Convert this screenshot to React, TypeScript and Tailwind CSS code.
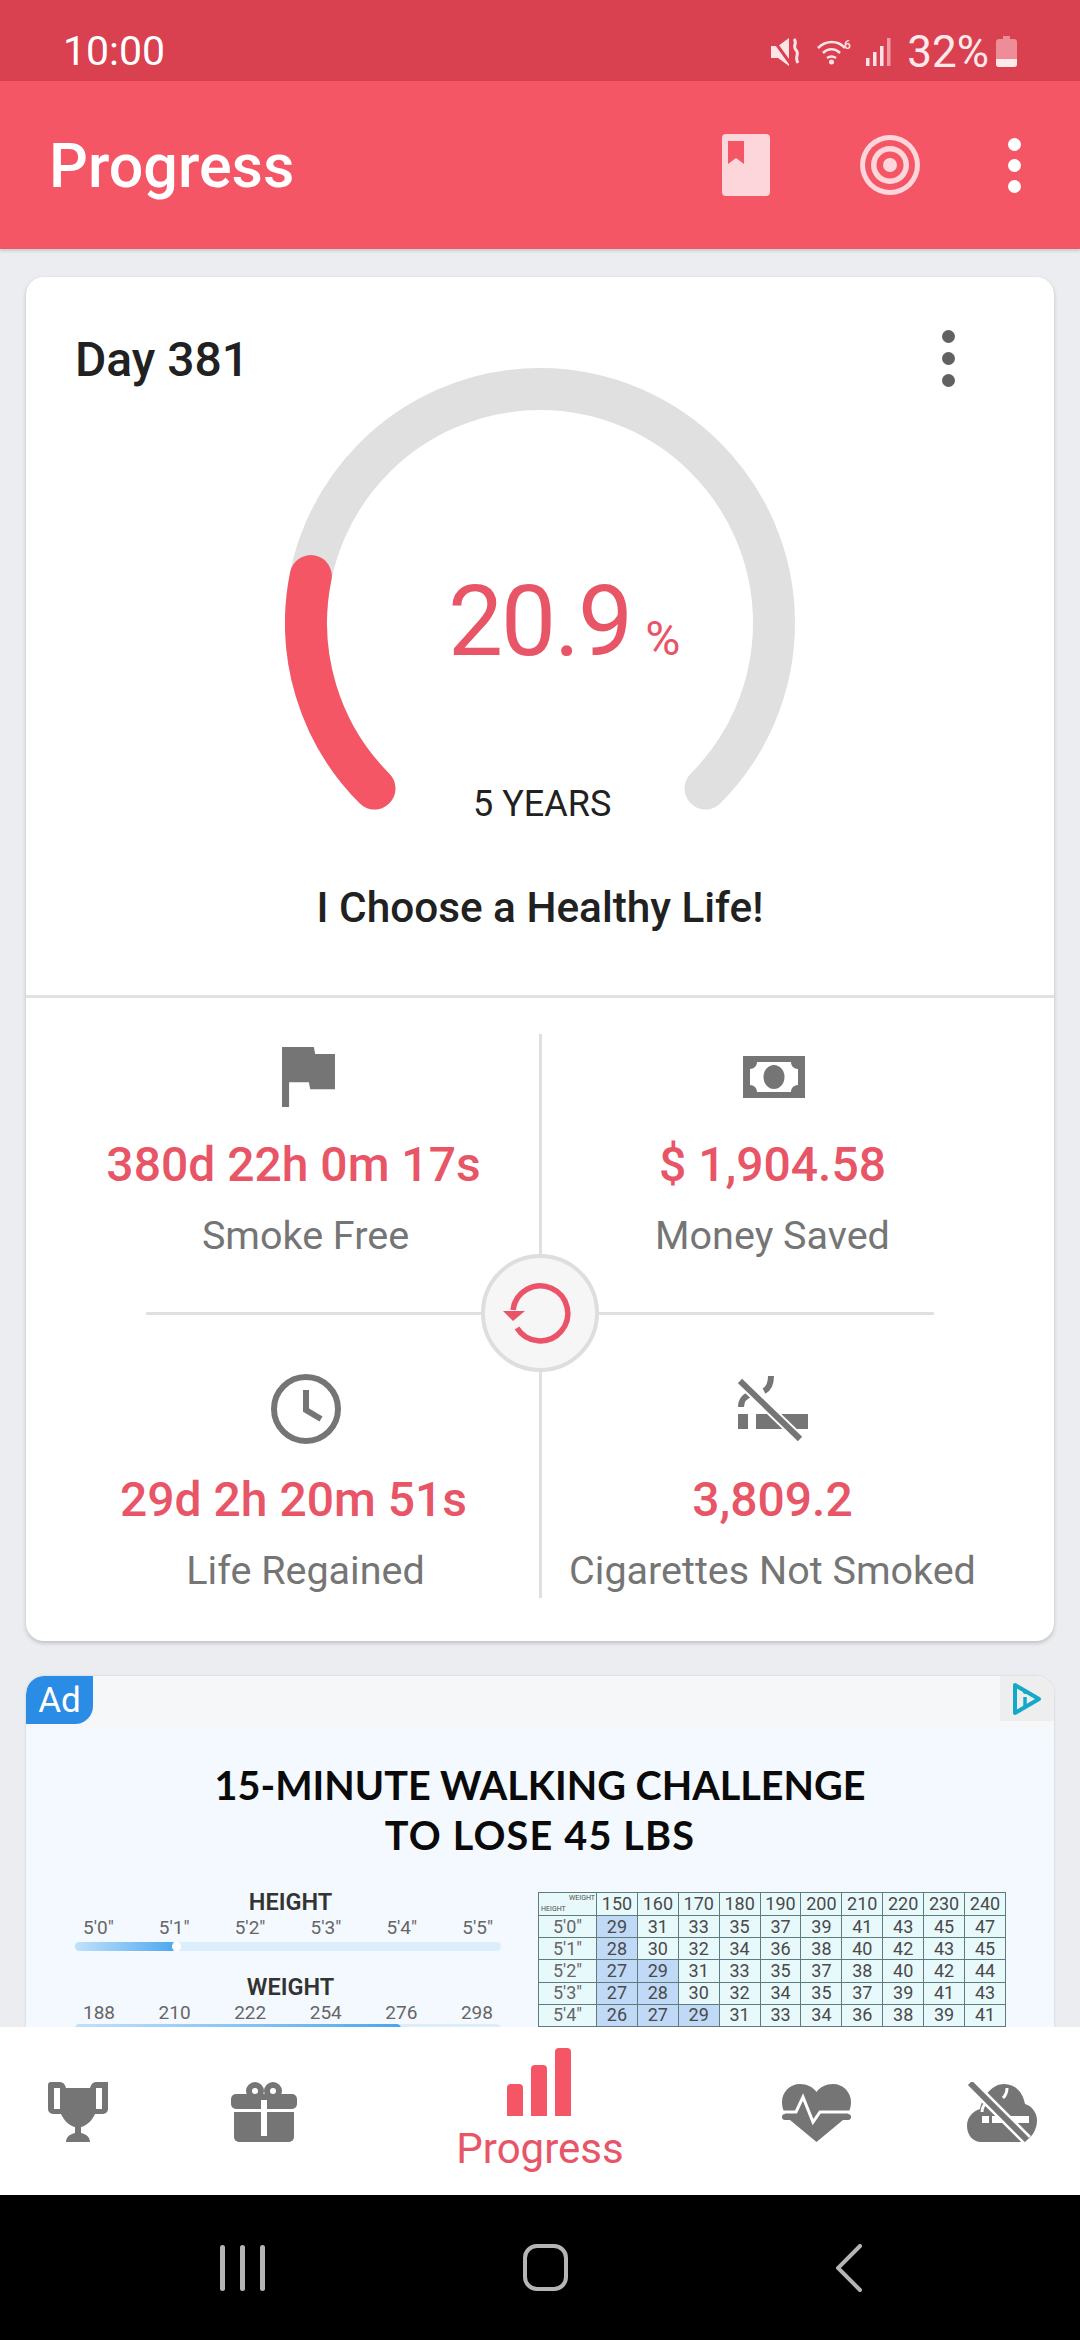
const GRAY = '#757575';

const tableHead = ['150', '160', '170', '180', '190', '200', '210', '220', '230', '240'];
const tableRows = [
  { h: `5'0"`, v: [29, 31, 33, 35, 37, 39, 41, 43, 45, 47], hi: 1 },
  { h: `5'1"`, v: [28, 30, 32, 34, 36, 38, 40, 42, 43, 45], hi: 1 },
  { h: `5'2"`, v: [27, 29, 31, 33, 35, 37, 38, 40, 42, 44], hi: 2 },
  { h: `5'3"`, v: [27, 28, 30, 32, 34, 35, 37, 39, 41, 43], hi: 2 },
  { h: `5'4"`, v: [26, 27, 29, 31, 33, 34, 36, 38, 39, 41], hi: 3 },
];

function Gauge() {
  // 270 degree track, r=234, red part ends ~11deg above horizontal
  return (
    <svg width="510" height="470" viewBox="0 0 510 470" className="block">
      <path d="M89.5 420.5 A234 234 0 1 1 420.5 420.5" fill="none" stroke="#E0E0E0" strokeWidth="42" strokeLinecap="round" />
      <path d="M89.5 420.5 A234 234 0 0 1 25.8 208" fill="none" stroke="#F45665" strokeWidth="42" strokeLinecap="round" />
    </svg>
  );
}

function Stat({ icon, value, label, valueClass }: { icon: React.ReactNode; value: string; label: string; valueClass: string }) {
  return (
    <div className="flex flex-col items-center">
      <div className="h-[70px] flex items-center justify-center">{icon}</div>
      <div className={`text-[48px] leading-[56px] font-medium text-[#E85567] ${valueClass}`}>{value}</div>
      <div className="mt-[18px] text-[39.5px] leading-[50px] text-[#757575]">{label}</div>
    </div>
  );
}

function AdTable() {
  return (
    <table className="mt-[3px] w-[468px] table-fixed border-collapse text-[18px] leading-none text-[#4a4a4a] text-center">
      <colgroup>
        <col className="w-[58px]" />
        {tableHead.map(h => <col key={h} />)}
      </colgroup>
      <tbody>
        <tr className="h-[23px] bg-[#E8F9FC]">
          <td className="border border-[#5F7C7C] p-0 relative">
            <span className="absolute right-[1px] top-[2px] text-[7px]">WEIGHT</span>
            <span className="absolute left-[2px] bottom-[2px] text-[7px]">HEIGHT</span>
          </td>
          {tableHead.map(h => <td key={h} className="border border-[#5F7C7C] p-0">{h}</td>)}
        </tr>
        {tableRows.map(r => (
          <tr key={r.h} className="h-[22.2px] bg-[#E8F9FC]">
            <td className="border border-[#5F7C7C] p-0 text-[#666]">{r.h}</td>
            {r.v.map((n, i) => (
              <td key={i} className={`border border-[#5F7C7C] p-0 ${i < r.hi ? 'bg-[#BFD9F7]' : ''}`}>{n}</td>
            ))}
          </tr>
        ))}
        {/* next row only peeks out above the bottom nav */}
        <tr className="h-[22.2px] bg-[#E8F9FC]">
          <td className="border border-[#5F7C7C] p-0" />
          {tableHead.map((h, i) => <td key={h} className={`border border-[#5F7C7C] p-0 ${i < 3 ? 'bg-[#BFD9F7]' : ''}`} />)}
        </tr>
      </tbody>
    </table>
  );
}

function Slider({ title, labels, fill, dot, trackClass }: { title: string; labels: string[]; fill: string; dot: boolean; trackClass: string }) {
  return (
    <div className="w-[426px] flex flex-col">
      <div className="pl-[5px] text-center text-[23.5px] leading-[26px] font-semibold text-[#333]">{title}</div>
      <div className="flex justify-between px-[8px] mt-[1px] text-[19px] leading-[24px] text-[#666]">
        {labels.map(l => <span key={l}>{l}</span>)}
      </div>
      <div className={`relative h-[9px] rounded-full bg-[#DCEDFC] ${trackClass}`}>
        <div className={`h-full rounded-full bg-gradient-to-r from-[#BFE2FB] to-[#4AA6EE] ${fill}`} />
        {dot && <div className="absolute left-[97px] top-[0px] w-[9px] h-[9px] rounded-full bg-white" />}
      </div>
    </div>
  );
}

export default function App() {
  return (
    <div className="w-[1080px] h-[2340px] flex flex-col overflow-hidden bg-[#EBEDF1] font-['Roboto',sans-serif]">
      {/* Status bar */}
      <div className="h-[81px] shrink-0 bg-[#D94050] flex items-center pl-[63px] pr-[63px] pt-[22px] text-white">
        <span className="text-[41px] leading-none">10:00</span>
        <div className="ml-auto flex items-center">
          <svg width="30" height="28" viewBox="0 0 30 28" fill="#FFE4E7">
            <path d="M0 8h7l11-8v28L7 20H0z" />
            <path d="M1 0l18 25" stroke="#D94050" strokeWidth="3" />
            <path d="M23 1c4 4-2 7 2 11s-2 7 2 13" fill="none" stroke="#FFE4E7" strokeWidth="3" />
          </svg>
          <svg width="36" height="26" viewBox="0 0 36 26" fill="none" stroke="#FFE4E7" strokeWidth="2.5" className="ml-[16px] overflow-visible">
            <path d="M1 9c8-8 20-8 27 0M6 14c5-5 12-5 17 0M10 19c3-2 6-2 9 0" />
            <circle cx="14.5" cy="23" r="2.5" fill="#FFE4E7" stroke="none" />
            <text x="27" y="10" fontSize="12" fontWeight="500" fill="#FFE4E7" stroke="none">6</text>
          </svg>
          <svg width="26" height="28" viewBox="0 0 26 28" className="ml-[13px]">
            <rect x="0" y="20" width="3.5" height="8" fill="#FFE4E7" />
            <rect x="7" y="14" width="3.5" height="14" fill="#FFE4E7" />
            <rect x="14" y="8" width="3.5" height="20" fill="#FFE4E7" />
            <rect x="21" y="0" width="3.5" height="28" fill="#F39AA4" />
          </svg>
          <span className="ml-[15px] text-[44px] leading-none text-[#FFE9EB]">32%</span>
          <svg width="21" height="31" viewBox="0 0 21 31" className="ml-[7px]">
            <path d="M7 0h7v3h4a3 3 0 0 1 3 3v22a3 3 0 0 1-3 3H3a3 3 0 0 1-3-3V6a3 3 0 0 1 3-3h4z" fill="#EE8C97" />
            <path d="M0 23h21v5a3 3 0 0 1-3 3H3a3 3 0 0 1-3-3z" fill="#FFE9EB" />
          </svg>
        </div>
      </div>

      {/* App bar */}
      <div className="h-[168px] shrink-0 bg-[#F45665] flex items-center pl-[49px] pr-[59px] shadow-[0_2px_3px_rgba(0,0,0,0.15)] z-10 text-white">
        <h1 className="text-[61px] leading-none font-medium mt-[3px]">Progress</h1>
        <svg width="48" height="62" viewBox="0 0 48 62" className="ml-auto">
          <rect width="48" height="62" rx="4" fill="#FDD6DB" />
          <path d="M6 7h16v23l-8-6-8 6z" fill="#F45665" />
        </svg>
        <svg width="60" height="60" viewBox="0 0 60 60" className="ml-[90px]">
          <circle cx="30" cy="30" r="30" fill="#FDD6DB" />
          <circle cx="30" cy="30" r="25" fill="#F45665" />
          <circle cx="30" cy="30" r="19" fill="#FDD6DB" />
          <circle cx="30" cy="30" r="13.5" fill="#F45665" />
          <circle cx="30" cy="30" r="7" fill="#FDD6DB" />
        </svg>
        <div className="ml-[88px] flex flex-col gap-[8px]">
          <div className="w-[13px] h-[13px] rounded-full bg-white" />
          <div className="w-[13px] h-[13px] rounded-full bg-white" />
          <div className="w-[13px] h-[13px] rounded-full bg-white" />
        </div>
      </div>

      {/* Scroll area */}
      <div className="flex-1 min-h-0 overflow-hidden px-[26px] pt-[28px]">
        {/* Main card */}
        <div className="h-[1364px] bg-white rounded-[18px] shadow-[0_2px_4px_rgba(0,0,0,0.2)] flex flex-col">
          {/* Gauge section */}
          <div className="h-[721px] shrink-0 relative flex flex-col items-center pt-[91px] border-b-[3px] border-[#E2E2E2]">
            <div className="absolute left-[49px] top-[58px] text-[48px] leading-[50px] font-medium text-[#212121]">Day 381</div>
            <div className="absolute left-[916px] top-[53px] flex flex-col gap-[9px]">
              <div className="w-[13px] h-[13px] rounded-full bg-[#616161]" />
              <div className="w-[13px] h-[13px] rounded-full bg-[#616161]" />
              <div className="w-[13px] h-[13px] rounded-full bg-[#616161]" />
            </div>
            <div className="relative">
              <Gauge />
              <div className="absolute left-[163px] top-[198px] flex items-baseline text-[#E85567]">
                <span className="text-[98px] leading-[112px] tracking-[-0.02em]">20.9</span>
                <span className="ml-[14px] text-[48px] leading-none">%</span>
              </div>
              <div className="absolute left-[188px] top-[415px] text-[36px] leading-[42px] text-[#212121]">5 YEARS</div>
            </div>
            <div className="mt-[46px] text-[42.3px] leading-[48px] font-medium text-[#212121]">I Choose a Healthy Life!</div>
          </div>

          {/* Stats */}
          <div className="relative flex-1 grid grid-cols-2 grid-rows-2 pl-[46px] pr-[48px] pt-[36px] pb-[48px]">
            <div className="absolute left-[513px] top-[36px] bottom-[46px] w-[3px] bg-[#E0E0E0]" />
            <div className="absolute left-[120px] right-[120px] top-[314px] h-[3px] bg-[#E0E0E0]" />
            <div className="absolute left-[455px] top-[256px] w-[118px] h-[118px] rounded-full bg-[#F6F6F6] border-[4px] border-[#DEDEDE] flex items-center justify-center">
              <svg width="80" height="80" viewBox="-40 -40 80 80">
                <path d="M-27 -3 A27.5 27.5 0 1 1 -23 15" fill="none" stroke="#EB5468" strokeWidth="5.5" />
                <path d="M-37 -2H-15L-27 8z" fill="#EB5468" />
              </svg>
            </div>
            <div className="pt-[8px]">
              <Stat
                value="380d 22h 0m 17s"
                label="Smoke Free"
                valueClass="mt-[25px] mr-[24px]"
                icon={
                  <svg width="53" height="60" viewBox="5 4 15 17" fill={GRAY} className="ml-[5px]">
                    <path d="M14.4 6L14 4H5v17h2v-7h5.6l.4 2h7V6z" />
                  </svg>
                }
              />
            </div>
            <div className="pt-[8px]">
              <Stat
                value="$ 1,904.58"
                label="Money Saved"
                valueClass="mt-[25px]"
                icon={
                  <svg width="62" height="42" viewBox="0 0 62 42" className="ml-[2px]">
                    <rect width="62" height="42" fill={GRAY} />
                    <path d="M14 6h34c0 4 3 7 7 7v16c-4 0-7 3-7 7H14c0-4-3-7-7-7V13c4 0 7-3 7-7z" fill="#fff" />
                    <ellipse cx="31" cy="21" rx="10.5" ry="12" fill={GRAY} />
                  </svg>
                }
              />
            </div>
            <div className="pt-[59px]">
              <Stat
                value="29d 2h 20m 51s"
                label="Life Regained"
                valueClass="mt-[28px] mr-[24px]"
                icon={
                  <svg width="70" height="70" viewBox="0 0 70 70" fill="none" stroke={GRAY} strokeWidth="6">
                    <circle cx="35" cy="35" r="32" />
                    <path d="M35 16v20l15 9" />
                  </svg>
                }
              />
            </div>
            <div className="pt-[59px]">
              <Stat
                value="3,809.2"
                label="Cigarettes Not Smoked"
                valueClass="mt-[28px]"
                icon={
                  <svg width="70" height="67" viewBox="0 0 70 67">
                    <rect x="0" y="38" width="10" height="15" fill={GRAY} />
                    <rect x="18" y="38" width="52" height="15" fill={GRAY} />
                    <path d="M3 31c0-7 4-11 10-13M26 15c6-3 7-9 7-15" fill="none" stroke={GRAY} strokeWidth="6" />
                    <path d="M2 5l60 58" stroke="#fff" strokeWidth="10" />
                    <path d="M2 5l60 58" stroke={GRAY} strokeWidth="6" />
                  </svg>
                }
              />
            </div>
          </div>
        </div>

        {/* Ad */}
        <div className="relative mt-[35px] h-[500px] bg-[#F3F9FE] rounded-t-[18px] overflow-hidden shadow-[0_0_3px_rgba(0,0,0,0.12)]">
          <div className="h-[54px] bg-[#F6F7F9]" />
          <div className="absolute left-0 top-0 w-[67px] h-[48px] rounded-tl-[18px] rounded-br-[18px] bg-[#2B8CE6] flex items-center justify-center text-[35px] leading-none text-white">Ad</div>
          <div className="absolute right-0 top-0 w-[54px] h-[45px] rounded-tr-[18px] bg-[#EEEEEE] flex items-center justify-center">
            <svg width="30" height="34" viewBox="0 0 30 34" fill="none" stroke="#16A8C8" strokeWidth="4" strokeLinejoin="round">
              <path d="M3 3l24 14L3 31z" />
              <path d="M13 15v9" strokeWidth="3.5" />
              <circle cx="13" cy="10" r="1" strokeWidth="2" />
            </svg>
          </div>
          <div className="pt-[30px] text-center text-[39.6px] leading-[50px] font-['Lato',sans-serif] font-bold text-[#0A0A0A]">
            <div>15-MINUTE WALKING CHALLENGE</div>
            <div className="tracking-[0.03em]">TO LOSE 45 LBS</div>
          </div>
          <div className="flex items-start pl-[49px] pt-[29px]">
            <div className="w-[463px] flex flex-col gap-[23px]">
              <Slider title="HEIGHT" labels={[`5'0"`, `5'1"`, `5'2"`, `5'3"`, `5'4"`, `5'5"`]} fill="w-[101px]" dot trackClass="mt-[2px]" />
              <Slider title="WEIGHT" labels={['188', '210', '222', '254', '276', '298']} fill="w-[326px]" dot={false} trackClass="-mt-[1px]" />
            </div>
            <AdTable />
          </div>
        </div>
      </div>

      {/* Bottom nav */}
      <div className="h-[168px] shrink-0 bg-white grid grid-cols-[156px_216px_336px_216px_156px] z-10">
        <div className="flex justify-center pt-[55px]">
          <svg width="60" height="60" viewBox="0 0 60 60" fill={GRAY}>
            <path fillRule="evenodd" d="M0 3a3 3 0 0 1 3-3h9c3 0 5 2 6 6h24c1-4 3-6 6-6h12v27a5 5 0 0 1-5 5h-8c-3 7-9 12-14 13v6c5 1 9 4 9 9H18c0-5 4-8 9-9v-6c-5-1-11-6-14-13H5a5 5 0 0 1-5-5zM6 6v21h6V6zM48 6v21h6V6z" />
          </svg>
        </div>
        <div className="flex justify-center pt-[55px]">
          <svg width="66" height="60" viewBox="0 0 66 60" fill={GRAY}>
            <path fillRule="evenodd" d="M15 9a9 9 0 0 1 18 0 9 9 0 0 1 18 0 9 9 0 0 1-18 0 9 9 0 0 1-18 0zM21 9a3 3 0 1 0 6 0 3 3 0 1 0-6 0zM39 9a3 3 0 1 0 6 0 3 3 0 1 0-6 0z" />
            <rect x="0" y="12" width="66" height="15" rx="5" />
            <path d="M3 30h60v25a5 5 0 0 1-5 5H8a5 5 0 0 1-5-5z" />
            <rect x="30" y="18" width="6" height="36" fill="#fff" />
          </svg>
        </div>
        <div className="flex flex-col items-center pt-[21px]">
          <svg width="66" height="68" viewBox="0 0 66 68" fill="#F45665">
            <path d="M0 40a4 4 0 0 1 4-4h8a4 4 0 0 1 4 4v28H0zM24 21a4 4 0 0 1 4-4h8a4 4 0 0 1 4 4v47H24zM48 4a4 4 0 0 1 4-4h8a4 4 0 0 1 4 4v64H48z" />
          </svg>
          <div className="mt-[9px] text-[42px] leading-[48px] text-[#E85567]">Progress</div>
        </div>
        <div className="flex justify-center pt-[57px]">
          <svg width="69" height="58" viewBox="0 0 69 58" fill={GRAY}>
            <path d="M34.5 58L8 36C2 30 0 24 0 18 0 8 8 0 18 0c7 0 13 3 16.5 8C38 3 44 0 51 0c10 0 18 8 18 18 0 6-2 12-8 18z" />
            <rect x="0" y="30" width="69" height="6" rx="3" />
            <path d="M-1 28H14L21 13 31 38 38 28H70" fill="none" stroke="#fff" strokeWidth="3" />
          </svg>
        </div>
        <div className="flex justify-center pt-[55px]">
          <svg width="70" height="60" viewBox="0 0 70 60" fill={GRAY}>
            <path d="M14 60C6 60 0 53 0 44c0-9 6-15 13-17C16 13 26 2 37 2c11 0 19 8 21 20 7 2 12 9 12 16 0 12-8 22-18 22z" />
            <path d="M15 34h7v7h-7zM25 34h37v7H25z" fill="#fff" />
            <path d="M15 30c0-5 2-8 6-10M36 16c3-3 4-6 4-10" fill="none" stroke="#fff" strokeWidth="3" />
            <path d="M3 1l57 57" stroke="#fff" strokeWidth="11" />
            <path d="M3 1l57 57" stroke={GRAY} strokeWidth="6" />
          </svg>
        </div>
      </div>

      {/* System nav */}
      <div className="h-[145px] shrink-0 bg-black grid grid-cols-3 pl-[91px] pr-[80px] items-center">
        <div className="flex justify-center gap-[15px]">
          <div className="w-[5px] h-[46px] rounded-full bg-[#B5B5B5]" />
          <div className="w-[5px] h-[46px] rounded-full bg-[#B5B5B5]" />
          <div className="w-[5px] h-[46px] rounded-full bg-[#B5B5B5]" />
        </div>
        <div className="flex justify-center">
          <div className="w-[45px] h-[47px] rounded-[14px] border-[4px] border-[#B5B5B5]" />
        </div>
        <div className="flex justify-center">
          <svg width="26" height="48" viewBox="0 0 26 48" fill="none" stroke="#B5B5B5" strokeWidth="4" strokeLinecap="round">
            <path d="M24 2L2 24l22 22" />
          </svg>
        </div>
      </div>
    </div>
  );
}
